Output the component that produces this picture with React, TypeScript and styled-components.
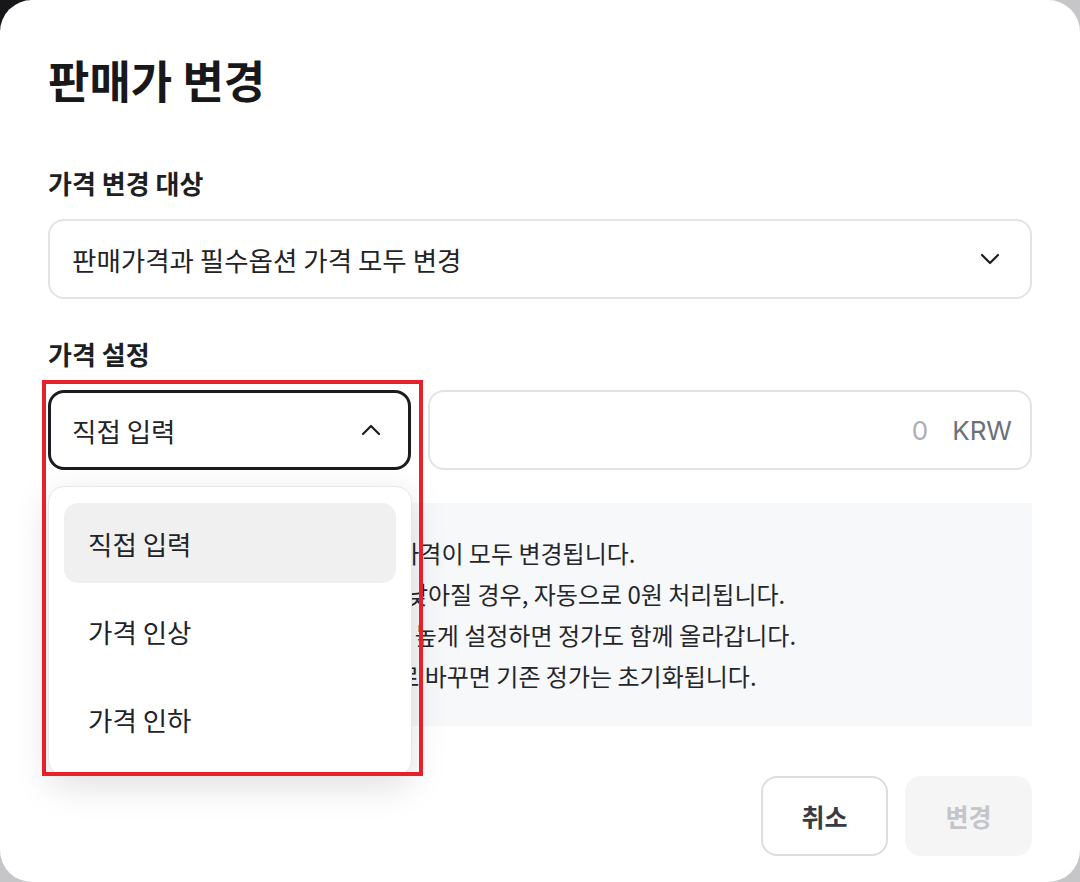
import { createGlobalStyle } from "styled-components";
import styled from "styled-components";
import { ChevronDown, ChevronUp } from "lucide-react";

const GlobalStyle = createGlobalStyle`
  html, body {
    margin: 0;
    padding: 0;
  }
  body {
    background: radial-gradient(circle at 0 0, #17171a 0, #17171a 30px, #c6c6c8 31px);
    font-family: "Noto Sans CJK KR", "Noto Sans", sans-serif;
    color: #1f2024;
  }
`;

const notices = [
  "선택상품의 판매가격과 필수옵션 가격이 모두 변경됩니다.",
  "가격 인하 후, 판매가격이 0원보다 낮아질 경우, 자동으로 0원 처리됩니다.",
  "가격 인상 시, 판매가격을 정가보다 높게 설정하면 정가도 함께 올라갑니다.",
  "판매가격 설정방식을 직접 입력으로 바꾸면 기존 정가는 초기화됩니다.",
];

const options = ["직접 입력", "가격 인상", "가격 인하"];

export default function App() {
  return (
    <>
      <GlobalStyle />
      <Modal>
        <Title>판매가 변경</Title>

        <Field $mt={55}>
          <Label>가격 변경 대상</Label>
          <Select>
            <span>판매가격과 필수옵션 가격 모두 변경</span>
            <ChevronDown size={32} strokeWidth={1.6} />
          </Select>
        </Field>

        <Field $mt={39}>
          <Label>가격 설정</Label>
          <Row>
            <SelectWrap>
              <Select $open>
                <span>직접 입력</span>
                <ChevronUp size={32} strokeWidth={1.6} />
              </Select>
              <Menu>
                {options.map((o, i) => (
                  <MenuItem key={o} $active={i === 0}>
                    {o}
                  </MenuItem>
                ))}
              </Menu>
              <Highlight />
            </SelectWrap>
            <PriceInput>
              <Amount>0</Amount>
              <Unit>KRW</Unit>
            </PriceInput>
          </Row>
        </Field>

        <Notice>
          {notices.map((n) => (
            <li key={n}>{n}</li>
          ))}
        </Notice>

        <Footer>
          <Button>취소</Button>
          <Button $primary disabled>
            변경
          </Button>
        </Footer>
      </Modal>
    </>
  );
}

const Modal = styled.div`
  width: 1080px;
  height: 882px;
  box-sizing: border-box;
  background: #ffffff;
  border-radius: 32px;
  padding: 48px 48px 0;
  display: flex;
  flex-direction: column;
`;

const Title = styled.h1`
  margin: 0;
  font-size: 45px;
  line-height: 64px;
  font-weight: 700;
  color: #18181b;
`;

const Field = styled.div<{ $mt: number }>`
  margin-top: ${(p) => p.$mt}px;
  display: flex;
  flex-direction: column;
  gap: 20px;
`;

const Label = styled.div`
  font-size: 26px;
  line-height: 32px;
  font-weight: 700;
  color: #1e1f23;
`;

const Select = styled.div<{ $open?: boolean }>`
  height: 80px;
  box-sizing: border-box;
  border: ${(p) => (p.$open ? "3px solid #1c1c20" : "2px solid #e2e3e7")};
  border-radius: 16px;
  padding: 0 ${(p) => (p.$open ? 21 : 24)}px 0 ${(p) => (p.$open ? 21 : 22)}px;
  display: flex;
  align-items: center;
  justify-content: space-between;
  font-size: 26.5px;
  color: #222327;
  background: #fff;

  svg {
    color: #1c1c20;
  }
`;

const Row = styled.div`
  display: flex;
  gap: 17px;
`;

const SelectWrap = styled.div`
  position: relative;
  width: 363px;
  flex-shrink: 0;
`;

const Menu = styled.div`
  position: absolute;
  top: calc(100% + 16px);
  left: 0;
  width: 364px;
  box-sizing: border-box;
  background: #ffffff;
  border: 1px solid #e8e8ea;
  border-radius: 16px;
  padding: 16px 15px;
  display: flex;
  flex-direction: column;
  gap: 8px;
  box-shadow: 0 10px 36px rgba(0, 0, 0, 0.13);
  z-index: 5;
`;

const MenuItem = styled.div<{ $active?: boolean }>`
  height: 80px;
  display: flex;
  align-items: center;
  padding: 0 24px;
  border-radius: 14px;
  font-size: 26.5px;
  color: #222327;
  background: ${(p) => (p.$active ? "#f0f0f1" : "transparent")};
`;

const Highlight = styled.div`
  position: absolute;
  top: -10px;
  left: -6px;
  width: 381px;
  height: 396px;
  box-sizing: border-box;
  border: 4px solid #e6212b;
  pointer-events: none;
  z-index: 6;
`;

const PriceInput = styled.div`
  flex: 1;
  height: 80px;
  box-sizing: border-box;
  border: 2px solid #e2e3e7;
  border-radius: 16px;
  display: flex;
  align-items: center;
  justify-content: flex-end;
  gap: 24px;
  padding: 0 18px 0 22px;
  font-family: Inter, "Noto Sans", sans-serif;
  font-size: 26px;
`;

const Amount = styled.span`
  color: #abadb2;
`;

const Unit = styled.span`
  color: #6c7079;
`;

const Notice = styled.ul`
  margin: 33px 0 0;
  list-style: none;
  background: #f7f8fa;
  padding: 29px 24px 30px;
  font-size: 24px;
  line-height: 41px;
  color: #25262b;

  li {
    white-space: nowrap;
  }
`;

const Footer = styled.div`
  margin-top: 50px;
  display: flex;
  justify-content: flex-end;
  gap: 17px;
`;

const Button = styled.button<{ $primary?: boolean }>`
  width: 127px;
  height: 80px;
  box-sizing: border-box;
  border-radius: 16px;
  font-family: inherit;
  font-size: 25px;
  font-weight: 700;
  border: ${(p) => (p.$primary ? "none" : "2px solid #dcdde2")};
  background: ${(p) => (p.$primary ? "#f5f5f6" : "#ffffff")};
  color: ${(p) => (p.$primary ? "#c3c5ca" : "#383b42")};
  cursor: pointer;
`;
